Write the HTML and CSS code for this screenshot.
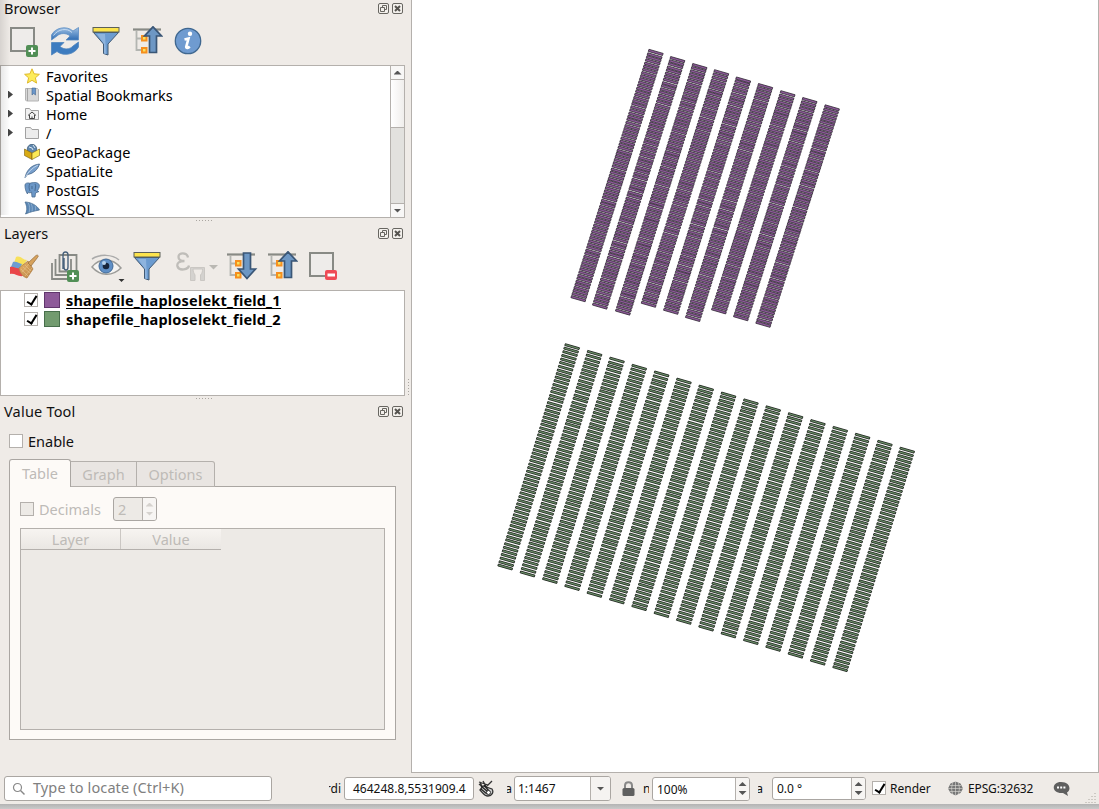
FILE: index.html
```html
<!DOCTYPE html>
<html lang="en">
<head>
<meta charset="utf-8">
<title>QGIS</title>
<link rel="stylesheet" href="styles.css">
</head>
<body>
<svg class="defs" width="0" height="0">
  <defs>
    <linearGradient id="gBlue" x1="0" y1="0" x2="0" y2="1"><stop offset="0" stop-color="#9dbfe3"/><stop offset="1" stop-color="#2f6db3"/></linearGradient>
    <linearGradient id="gBrush" x1="0" y1="0" x2="1" y2="1"><stop offset="0" stop-color="#e9b46c"/><stop offset="1" stop-color="#b98443"/></linearGradient>
    <symbol id="float" viewBox="0 0 11 11"><rect x=".5" y=".5" width="10" height="10" rx="1.5" fill="#f3f0ec" stroke="#686661"/><path d="M4.5 5V2.5h4v4H6.500M2.500 4.500h4v4h-4z" fill="none" stroke="#686661"/></symbol>
    <symbol id="close" viewBox="0 0 11 11"><rect x=".5" y=".5" width="10" height="10" rx="1.5" fill="#f3f0ec" stroke="#686661"/><path d="M3 3l5 5M8 3l-5 5" stroke="#55534f" stroke-width="2"/></symbol>
    <symbol id="plus" viewBox="0 0 12 12"><rect width="12" height="12" rx="2" fill="#518f56"/><path d="M6 2.500v7M2.500 6h7" stroke="#fff" stroke-width="2"/></symbol>
    <symbol id="filter" viewBox="0 0 30 30"><path d="M2.500 6.500l10 11.500v9.500l4.500 1.500V18L27.500 6.500z" fill="#6b9bd0" stroke="#415a75"/><path d="M6 8h8l1 20-2-.5V18z" fill="#8eb4de"/><rect x="2" y="1.500" width="26" height="4.500" fill="#fbe34d" stroke="#5c6058"/></symbol>
    <symbol id="tree" viewBox="0 0 30 30"><path d="M0 3.500h28" stroke="#888a85" stroke-width="2.200"/><path d="M3.500 5v20M3 12.500h6M3 24h6" stroke="#b3b5b1" stroke-width="1.800" fill="none"/><rect x="9" y="10" width="4.500" height="4.500" fill="#f7e35d" stroke="#f68f1e" stroke-width="2"/><rect x="9" y="22" width="4.500" height="4.500" fill="#f7e35d" stroke="#f68f1e" stroke-width="2"/></symbol>
    <symbol id="treeup" viewBox="0 0 30 30"><use href="#tree"/><path d="M20 .8l8.500 9.200h-5v16.500h-7V10h-5z" fill="#6d97c4" stroke="#3a5676" stroke-width="1.700"/></symbol>
  </defs>
</svg>

<div class="window">
  <div class="work">
    <aside class="docks">
      <section class="dock browser">
        <header class="title"><span>Browser</span><svg class="tb"><use href="#float"/></svg><svg class="tb"><use href="#close"/></svg></header>
        <div class="tools">
          <svg viewBox="0 0 30 30"><rect x="2" y="2" width="23" height="23" fill="#eeecea" stroke="#888a85" stroke-width="2"/><use href="#plus" x="17" y="19" width="12" height="12"/></svg>
          <svg viewBox="0 0 30 30"><path d="M1.500 14V9C5 2 16-1 23 5l5.500-3.500V14H16l4-4C16 6.500 10 7 7 10z" fill="url(#gBlue)" stroke="#5c8dc3" stroke-width=".8"/><path d="M3.500 9.500C8 3 17 1.500 22 6.500" stroke="#c5daf0" fill="none"/><path d="M28.500 16v5C25 28 14 31 7 25.500L1.500 29V16.500H14l-4 4c4 3.500 10 3 13-.5z" fill="#3d7cc0" stroke="#5085bd" stroke-width=".8"/></svg>
          <svg><use href="#filter"/></svg>
          <svg class="nudge"><use href="#treeup"/></svg>
          <svg viewBox="0 0 30 30"><circle cx="15" cy="15" r="12.700" fill="#6f9bd0" stroke="#3f678f" stroke-width="1.300"/><circle cx="17" cy="7.800" r="2.200" fill="#fff"/><path d="M11.500 13.500l4-1-2.300 8.500c0 1.500 2 1 3.500-.5" fill="none" stroke="#fff" stroke-width="2.600"/></svg>
        </div>
        <div class="listbox browserbox">
          <ul class="tree">
            <li><i></i><svg viewBox="0 0 16 16"><path d="M8 .8l2.100 5 5.300.5-4 3.500 1.200 5.300L8 12.300l-4.600 2.800 1.200-5.300-4-3.500 5.300-.5z" fill="#fdec5a" stroke="#dfb92c"/></svg>Favorites</li>
            <li><i class="ex"></i><svg viewBox="0 0 16 16"><path d="M1.500 1.500h12l1 1v11.500h-12l-1-1z" fill="#d8d8d8" stroke="#b4b4b4"/><path d="M3.500 1v13" stroke="#a5a5a5"/><path d="M8 1h3.500v7L9.700 6.500 8 8z" fill="#6b97cb" stroke="#41658f" stroke-width=".6"/></svg>Spatial Bookmarks</li>
            <li><i class="ex"></i><svg viewBox="0 0 16 16"><path d="M1.500 13.500v-11h4l1.500 2h7.500v9z" fill="#f1f1f1" stroke="#a1a1a1"/><path d="M4 9.500l4-3.500 4 3.500M5.500 9v3.500h5V9M8 12.500V10.500" fill="none" stroke="#333" stroke-width=".9"/></svg>Home</li>
            <li><i class="ex"></i><svg viewBox="0 0 16 16"><path d="M1.500 13.500v-11h5l1.500 2h6.500v9z" fill="#ececec" stroke="#a1a1a1"/></svg>/</li>
            <li><i></i><svg viewBox="0 0 16 16"><circle cx="8" cy="5" r="4.700" fill="#5f86ad" stroke="#34536f" stroke-width=".7"/><path d="M5 3l3 1 1 2M9 1l2 3" stroke="#dce8f3" fill="none"/><path d="M.5 5L8 9v6.500l-7.500-4z" fill="#d8aa14" stroke="#775d12" stroke-width=".6"/><path d="M15.500 5L8 9v6.500l7.500-4z" fill="#fbe957" stroke="#775d12" stroke-width=".6"/></svg>GeoPackage</li>
            <li><i></i><svg viewBox="0 0 16 16"><path d="M1 15C2 9 6 2 15.500 1 14 6 10 10.500 3.500 11.500z" fill="#79a0cd" stroke="#3f6186" stroke-width=".8"/><path d="M1 15C4 9 8 5 14 2" stroke="#dce9f6" fill="none" stroke-width=".7"/></svg>SpatiaLite</li>
            <li><i></i><svg viewBox="0 0 16 16"><path d="M1 3C1 1 4 .5 6 1.300 8 .5 14-.5 15.300 3c.5 2.500-1.300 5-2.300 6l2 .5-3.500 1.500L11 15H8l-.5-5L6 11 4 10 3.500 12C2 10 .8 6 1 3z" fill="#6b97c7" stroke="#4a6c90" stroke-width=".8"/><path d="M6 1.500C4.500 4 5 7 6 9M11 2c1.500 2 0 4 0 7M8 4v3" fill="none" stroke="#38597c" stroke-width=".7"/></svg>PostGIS</li>
            <li><i></i><svg viewBox="0 0 16 16"><path d="M1 1c5 0 12 3 14.500 8C11 10 7 10.500 1.500 13 3.500 9 3 5 1 1z" fill="#5c88b6" stroke="#41668b" stroke-width=".7"/><path d="M4 1.500c2 3 2 7 1 10M7 2.500c1.500 3 1.500 5 1 8M11 4.500c.8 2 .8 3 .3 5" fill="none" stroke="#a9c4de" stroke-width=".6"/></svg>MSSQL</li>
          </ul>
          <div class="scroll"><b class="btn"><i class="up"></i></b><b class="thumb"></b><b class="track"></b><b class="btn"><i class="down"></i></b></div>
        </div>
        <div class="dots"></div>
      </section>

      <section class="dock layers">
        <header class="title raised"><span>Layers</span><svg class="tb"><use href="#float"/></svg><svg class="tb"><use href="#close"/></svg></header>
        <div class="tools">
          <svg viewBox="0 0 30 30"><path d="M7 6c5-2 6 3 11 3l-5 7-8-4z" fill="#f8e15b"/><path d="M4 11c4-1 6 2 9 2l-3 6-8-3z" fill="#6e9dd1"/><path d="M1 16c4-1 6 2 10 1l3 8c-5 1-8-3-13-2z" fill="#e94649"/><path d="M10 17l9-7 5 8-6 9c-4-1-7-5-8-10z" fill="url(#gBrush)" stroke="#b18147" stroke-width=".8"/><path d="M19 12l8-7.500c2-1 3 .5 1.500 2L22 15z" fill="#d6a25d" stroke="#9d7240" stroke-width=".8"/><path d="M12 18l7 7M14 16l7 6M16 14l6 6M13 21l7-8M16 25l7-8" stroke="#e8c58d" stroke-width=".6"/></svg>
          <svg viewBox="0 0 30 30"><path d="M2 12v16h15M5.500 8v16H21V8M9.500 4h17v16.500h-17z" fill="none" stroke="#888a85" stroke-width="1.800"/><path d="M13 18V4c0-4 5-4 5 0v12c0 4-4 4-4 0V7" fill="none" stroke="#49627c" stroke-width="1.400"/><use href="#plus" x="17" y="19" width="12" height="12"/></svg>
          <svg class="eye" viewBox="0 0 33 30"><path d="M1 8C9 3 21 3 28 9" fill="none" stroke="#aaa" stroke-width="1.500"/><path d="M1 16C8 7 21 6 30 17 21 26 9 25 1 16z" fill="#f5f4f2" stroke="#9b9b98" stroke-width="1.500"/><circle cx="15" cy="15" r="7" fill="#5f8fc6" stroke="#426a97"/><circle cx="15" cy="15" r="3.300" fill="#17253b"/><circle cx="13" cy="12" r="2" fill="#b7d2ed"/><path d="M27.500 28h6l-3 3z" fill="#333"/></svg>
          <svg><use href="#filter"/></svg>
          <svg class="eps" viewBox="0 0 44 30"><path d="M13 6.500C12 1 3.500 1 3.500 6c0 3 3 4 6 4-5 0-8 2-7 5.500 2 5 11 3 11.500-1" fill="none" stroke="#bfbdb9" stroke-width="2.300"/><path d="M15.500 16.500h14v13h-4V24c2-2 2-4 2-6H18c0 3 1 4 2 6v5.500h-4.500z" fill="#d4d2cf" stroke="#cac7c3"/><path d="M34 14h9l-4.500 4.500z" fill="#bab8b3"/></svg>
          <svg class="down" viewBox="0 0 30 30"><use href="#tree"/><path d="M20 27.500l8.500-9.500h-5V2h-7v16h-5z" fill="#6d97c4" stroke="#3a5676" stroke-width="1.700"/></svg>
          <svg><use href="#treeup"/></svg>
          <svg class="rem" viewBox="0 0 30 30"><rect x="2" y="2" width="23" height="23" fill="#eeecea" stroke="#888a85" stroke-width="2"/><rect x="17" y="19" width="12" height="10" rx="2" fill="#ef4b55"/><path d="M19.500 24h7.500" stroke="#fff" stroke-width="3"/></svg>
        </div>
        <div class="listbox layerbox">
          <div class="layer"><span class="chk on"></span><i class="sw purple"></i><b class="cur">shapefile_haploselekt_field_1</b></div>
          <div class="layer"><span class="chk on"></span><i class="sw green"></i><b>shapefile_haploselekt_field_2</b></div>
        </div>
        <div class="dots"></div>
      </section>

      <section class="dock value">
        <header class="title raised"><span class="wide">Value Tool</span><svg class="tb"><use href="#float"/></svg><svg class="tb"><use href="#close"/></svg></header>
        <label class="enable"><span class="chk"></span>Enable</label>
        <div class="tabs"><span class="tab active">Table</span><span class="tab graph">Graph</span><span class="tab opts">Options</span></div>
        <div class="pane">
          <div class="decimals"><span class="chk off"></span><span class="dlabel">Decimals</span><span class="spin dis"><span>2</span><b><i class="up"></i><i class="down"></i></b></span></div>
          <div class="grid"><div class="head"><span>Layer</span><span>Value</span></div></div>
        </div>
      </section>
      <div class="vdots"></div>
    </aside>
    <main class="map"><svg id="canvas" viewBox="412 0 686 772" width="686" height="772"></svg></main>
  </div>

  <footer class="status">
    <div class="field locate"><svg viewBox="0 0 14 14"><circle cx="5.500" cy="5.500" r="4" fill="none" stroke="#888" stroke-width="1.200"/><path d="M8.500 8.500l4 4" stroke="#888" stroke-width="1.500"/></svg><span>Type to locate (Ctrl+K)</span></div>
    <span class="cut rdi">rdi</span>
    <div class="field coord">464248.8,5531909.4</div>
    <svg class="mouse" viewBox="0 0 16 18"><path d="M1 2l9 3M1 4l6 5M2 2l3 7M5 1l4 7M9 6l5-5" stroke="#333" stroke-width="1.300"/><path d="M2 10l3-4 9 3c2 3 0 7-4 7S5 13 2 10z" fill="#ccc" stroke="#333" stroke-width="1.300"/><path d="M3 6l7 6M6 5l5 6M3 9l6 5" stroke="#222" stroke-width="1.200"/><circle cx="10.500" cy="12.500" r="2" fill="#fff" stroke="#333"/></svg>
    <span class="cut sa">a</span>
    <div class="field scale"><span>1:1467</span><b><i class="down"></i></b></div>
    <svg class="lock" viewBox="0 0 13 16"><path d="M3 8V4.500C3 0 10 0 10 4.500V8" fill="none" stroke="#888" stroke-width="2"/><rect x=".5" y="7" width="12" height="8" rx="1.500" fill="#5f5f5f"/></svg>
    <span class="cut mag">n</span>
    <div class="spin zoom"><span>100%</span><b><i class="up"></i><i class="down"></i></b></div>
    <span class="cut rot">a</span>
    <div class="spin angle"><span>0.0 °</span><b><i class="up"></i><i class="down"></i></b></div>
    <span class="chk on rchk"></span><span class="render">Render</span>
    <svg class="globe" viewBox="0 0 15 15"><path d="M7.500 .5l5 2 2.500 5-2.500 4.500-5 2.500-5-2.500L0 7.500l2.500-5z" fill="#777"/><path d="M0 7.500h15M2 4.500h11M2 10.500h11M7.500 0v15M4.500 2Q2.500 7.500 4.500 13M10.500 2q2 5.500 0 11" fill="none" stroke="#dedbd7" stroke-width=".6"/></svg>
    <span class="epsg">EPSG:32632</span>
    <svg class="bubble" viewBox="0 0 17 16"><path d="M8 1c10 0 10 9 6 10.500l1 3.500-5-3C-2 13-2 1 8 1z" fill="#5f5f5f"/><path d="M4 6.500h2M7.200 6.500h2M10.400 6.500h2" stroke="#fff" stroke-width="2"/></svg>
    <svg class="grip" viewBox="0 0 12 12"><path d="M10 1v1M7 4v1M10 4v1M4 7v1M7 7v1M10 7v1M1 10v1M4 10v1M7 10v1M10 10v1" stroke="#aaa69f" stroke-width="1"/></svg>
  </footer>
  <div class="edge"></div>
</div>
<script src="plots.js"></script>
</body>
</html>
```

FILE: styles.css
```css
* { box-sizing: border-box; }
body { margin: 0; background: #efebe7; font-family: "Noto Sans", sans-serif; font-size: 14.5px; color: #111; overflow: hidden; }
.defs { position: absolute; }
.window { position: relative; width: 1099px; height: 809px; display: flex; flex-direction: column; background: #efebe7; }
.window::after { content: ""; position: absolute; left: 0; top: 0; width: 10px; height: 215px; background: linear-gradient(90deg, rgba(0,0,0,.1), rgba(0,0,0,0)); }
.work { display: flex; height: 773px; }
.docks { position: relative; width: 411px; }
.map { width: 688px; height: 773px; background: #fff; border: solid #b4b0ac; border-width: 0 1px 1px; }
.map svg { display: block; }
.dock { width: 405px; display: flex; flex-direction: column; }
.browser { height: 225px; }
.layers { height: 178px; }
.title { height: 18px; padding: 0 2px 0 4px; display: flex; align-items: center; gap: 3px; }
.title span { flex: 1; line-height: 16px; padding-bottom: 2px; }
.title .wide { letter-spacing: .2px; }
.tb { width: 11px; height: 11px; margin-bottom: 1px; }
.raised .tb { margin-bottom: 2px; }
.tools { height: 47px; padding: 8px 0 0 9px; display: flex; gap: 11px; }
.tools svg { width: 30px; height: 30px; flex: none; overflow: visible; }
.tools .nudge { margin: 0 -1px 0 1px; }
.tools .eye { width: 33px; margin-right: -3px; }
.tools .eps { width: 44px; margin-left: 2px; }
.tools .down { margin-left: -3px; }
.tools .rem { margin-left: -1px; }
.listbox { border: 1px solid #b4b0ac; background: #fff; }
.browserbox { height: 153px; display: flex; overflow: hidden; }
.tree { list-style: none; margin: 0; padding: 0; flex: 1; }
.tree li { height: 19px; line-height: 18px; display: flex; align-items: center; padding-left: 7px; color: #000; }
.tree li svg { width: 16px; height: 16px; margin: 0 6px 0 8px; }
.tree li > i { width: 8px; height: 8px; }
.tree .ex { background: #444; clip-path: polygon(0 0, 5px 50%, 0 100%); }
.scroll { width: 14px; border-left: 1px solid #b4b0ac; display: flex; flex-direction: column; }
.scroll .btn { height: 13px; display: flex; align-items: center; justify-content: center; background: #f8f7f6; }
.scroll .thumb { height: 49px; border: solid #b4b0ac; border-width: 1px 0; background: linear-gradient(90deg, #fff, #f0eeec); }
.scroll .track { flex: 1; background: #e2e1de; border-bottom: 1px solid #b4b0ac; }
i.up, i.down { display: block; width: 8px; height: 4px; background: #555; clip-path: polygon(50% 0, 100% 100%, 0 100%); }
i.down { clip-path: polygon(0 0, 100% 0, 50% 100%); }
.dots { width: 16px; height: 1px; margin: 2px 0 0 196px; background: repeating-linear-gradient(90deg, #aaa6a1 0 1px, transparent 1px 3px); }
.vdots { position: absolute; left: 408px; top: 379px; width: 1px; height: 16px; background: repeating-linear-gradient(#aaa6a1 0 1px, transparent 1px 3px); }
.layerbox { height: 106px; }
.layer { height: 19px; display: flex; align-items: center; padding-left: 23px; }
.layer b { font-size: 14.5px; line-height: 16px; height: 17px; letter-spacing: .19px; color: #000; }
.layer .cur { border-bottom: 1px solid #000; }
.layer .chk { margin-bottom: 1px; }
.chk { position: relative; width: 14px; height: 14px; flex: none; background: #fff; border: 1px solid #b4b0ac; }
.chk.on::after { content: ""; position: absolute; left: 4px; top: 0; width: 4px; height: 9px; border: solid #000; border-width: 0 2px 2px 0; transform: rotate(32deg); }
.chk.off { background: #edeae6; }
.sw { width: 16px; height: 16px; margin: 0 6px 1px 6px; border: 1px solid #60366c; background: #8d5a99; }
.sw.green { border-color: #476e4b; background: #729b6f; }
.enable { display: flex; align-items: center; gap: 5px; height: 20px; margin: 10px 0 0 9px; }
.tabs { height: 28px; margin: 8px 0 0 9px; display: flex; align-items: flex-end; color: #bebbb7; position: relative; z-index: 1; }
.tab { height: 26px; line-height: 24px; text-align: center; border: 1px solid #b4b0ac; border-left: 0; background: #e9e5e2; border-radius: 0 3px 0 0; }
.tab.active { width: 62px; height: 28px; line-height: 27px; background: #fdfaf7; border: 1px solid #aaa6a2; border-bottom: 0; border-radius: 3px 3px 0 0; }
.tab.graph { width: 66px; border-radius: 0; }
.tab.opts { width: 78px; }
.pane { width: 387px; height: 254px; margin: -1px 0 0 9px; border: 1px solid #aaa6a2; background: #fdfaf7; padding: 10px 10px; color: #bebbb7; }
.decimals { display: flex; align-items: center; height: 24px; }
.dlabel { width: 74px; margin-left: 5px; }
.spin { display: flex; border: 1px solid #aaa6a2; border-radius: 3px; background: #fff; overflow: hidden; }
.spin > span { flex: 1; padding-left: 4px; }
.spin > b { width: 14px; border-left: 1px solid #b4b0ac; background: #f7f5f3; display: flex; flex-direction: column; justify-content: center; align-items: center; gap: 5px; }
.spin.dis { width: 44px; height: 24px; background: #edeae6; line-height: 22px; }
.dis i { background: #d5d2ce; }
.grid { height: 202px; margin-top: 7px; background: #edeae6; border: 1px solid #b4b0ac; }
.head { display: flex; width: 200px; height: 21px; border-bottom: 1px solid #b4b0ac; background: linear-gradient(#f7f4f1, #eae7e3); line-height: 21px; }
.head span { width: 99px; text-align: center; }
.head span + span { width: 101px; border-left: 1px solid #cbc7c3; }
.status { height: 31px; display: flex; align-items: center; padding-left: 4px; font-size: 12px; }
.status > * { flex: none; }
.field { background: #fff; border: 1px solid #aaa6a2; border-radius: 3px; display: flex; align-items: center; }
.locate { width: 268px; height: 25px; padding-left: 7px; font-size: 14.5px; letter-spacing: .1px; color: #808080; }
.locate span { line-height: 19px; padding-bottom: 2px; }
.locate svg { width: 14px; height: 14px; margin-right: 7px; }
.cut { overflow: hidden; display: flex; justify-content: flex-end; }
.rdi { width: 12px; margin-left: 57px; }
.coord { width: 130px; height: 23px; margin-left: 3px; padding-left: 8px; }
.mouse { width: 16px; height: 18px; margin-left: 4px; }
.sa { width: 5px; margin-left: 13px; }
.scale { width: 97px; height: 25px; margin-left: 2px; overflow: hidden; }
.scale span { flex: 1; padding-left: 3px; }
.scale b { width: 20px; height: 23px; display: flex; align-items: center; justify-content: center; border-left: 1px solid #b4b0ac; background: #f5f3f1; }
.lock { width: 13px; height: 16px; margin-left: 11px; }
.mag { width: 6px; margin-left: 8px; justify-content: flex-start; }
.zoom { width: 98px; height: 24px; margin-left: 3px; line-height: 23px; }
.rot { width: 5px; margin-left: 8px; }
.angle { width: 94px; height: 23px; margin-left: 9px; line-height: 22px; }
.rchk { margin-left: 6px; margin-bottom: 1px; }
.render { margin-left: 4px; width: 41px; }
.globe { width: 15px; height: 15px; margin-left: 17px; }
.epsg { width: 67px; margin-left: 5px; letter-spacing: -.15px; }
.bubble { width: 17px; height: 16px; margin-left: 18px; }
.grip { width: 12px; height: 12px; margin-left: 15px; align-self: flex-end; }
.edge { height: 5px; background: linear-gradient(#b3b3b3, #cacaca); }
```

FILE: plots.js
```js
// Field trial plots: each strip runs from its upper left corner to its lower left corner.
const canvas = document.getElementById('canvas');
const NS = 'http://www.w3.org/2000/svg';
let seed = 7;
const random = () => (seed = (seed * 16807) % 2147483647) / 2147483647;

function strip(x1, y1, x2, y2, pitch, thick, fill, stroke, strokeWidth) {
  const len = Math.hypot(x2 - x1, y2 - y1);
  const n = Math.round(len / pitch);
  const ux = (x2 - x1) / len, uy = (y2 - y1) / len;
  let d = '';
  for (let k = 0; k < n; k++) {
    const t = k * (len - thick) / (n - 1) + (random() - 0.5) * 0.4;
    const x = x1 + ux * t, y = y1 + uy * t;
    d += `M${x.toFixed(2)} ${y.toFixed(2)}l14.200 4.100l${(ux * thick).toFixed(2)} ${(uy * thick).toFixed(2)}l-14.200-4.100z`;
  }
  const p = document.createElementNS(NS, 'path');
  p.setAttribute('d', d);
  p.setAttribute('fill', fill);
  p.setAttribute('stroke', stroke);
  p.setAttribute('stroke-width', strokeWidth);
  canvas.appendChild(p);
}

[[648.9, 49.5, 570.9, 297.7], [670.7, 56.4, 592.5, 305], [692.8, 63.4, 615.5, 311],
 [714.5, 69.8, 641.2, 303.3], [736.5, 76.8, 663.5, 310.3], [758.5, 83.5, 685.5, 317.3],
 [780.8, 90.8, 711.5, 309.7], [802.8, 97.5, 733.5, 316.7], [825.2, 104.8, 755.8, 323.3]
].forEach(s => strip(...s, 3.250, 2.200, '#8d5a99', '#2c2430', 0.800));

for (let i = 0; i < 16; i++) {
  strip(565.4 + i * 22.33, 343.5 + i * 6.910, 497.8 + i * 22.330, 566 + i * 6.780, 3.750, 1.900, '#729b6f', '#1d231d', 0.900);
}
```
